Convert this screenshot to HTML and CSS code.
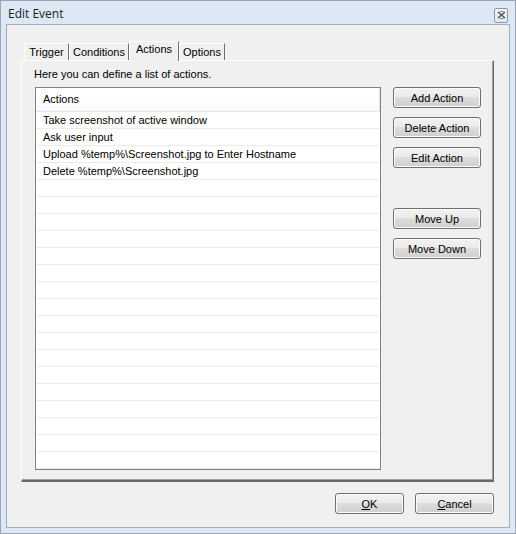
FILE: index.html
```html
<!DOCTYPE html>
<html>
<head>
<meta charset="utf-8">
<link rel="stylesheet" href="styles.css">
</head>
<body>
<div class="window">
  <div class="titlebar">
    <span class="title">Edit Event</span>
    <span class="close">
      <svg width="9" height="8" viewBox="0 0 9 8"><path d="M1 1 L8 7 M8 1 L1 7" stroke="#555" stroke-width="1.6" fill="none"/><path d="M2.5 0.5 h4 M2.5 7.5 h4" stroke="#888" stroke-width="1" fill="none"/></svg>
    </span>
  </div>
  <div class="client">
    <div class="tabs">
      <div class="tab t1">Trigger</div>
      <div class="tab t2">Conditions</div>
      <div class="tab sel">Actions</div>
      <div class="tab t4">Options</div>
    </div>
    <div class="panel">
      <div class="hint">Here you can define a list of actions.</div>
      <div class="content">
        <div class="list">
          <div class="lhead">Actions</div>
          <div class="row">Take screenshot of active window</div>
          <div class="row">Ask user input</div>
          <div class="row">Upload %temp%\Screenshot.jpg to Enter Hostname</div>
          <div class="row">Delete %temp%\Screenshot.jpg</div>
          <div class="row"></div><div class="row"></div><div class="row"></div><div class="row"></div>
          <div class="row"></div><div class="row"></div><div class="row"></div><div class="row"></div>
          <div class="row"></div><div class="row"></div><div class="row"></div><div class="row"></div>
          <div class="row"></div><div class="row"></div><div class="row"></div><div class="row"></div>
          <div class="row"></div>
        </div>
        <div class="side">
          <button class="btn">Add Action</button>
          <button class="btn">Delete Action</button>
          <button class="btn">Edit Action</button>
          <button class="btn gap">Move Up</button>
          <button class="btn">Move Down</button>
        </div>
      </div>
    </div>
    <div class="footer">
      <button class="btn ok"><u>O</u>K</button>
      <button class="btn cancel"><u>C</u>ancel</button>
    </div>
  </div>
</div>
</body>
</html>
```

FILE: styles.css
```css
* { box-sizing: border-box; }
html, body { margin: 0; padding: 0; }
body {
  width: 516px;
  height: 534px;
  font-family: "Liberation Sans", Arial, sans-serif;
  font-size: 11px;
  color: #000;
  overflow: hidden;
}
.window {
  width: 516px;
  height: 534px;
  background: #dde8f5;
  border: 1px solid #9aa6b6;
  padding: 0 5px 5px 5px;
  display: flex;
  flex-direction: column;
}
.titlebar {
  height: 23px;
  display: flex;
  align-items: center;
  justify-content: space-between;
  position: relative;
}
.title {
  font-family: "Open Sans", "Liberation Sans", sans-serif;
  font-size: 12px;
  margin-left: 2px;
  margin-top: 2px;
  color: #1e1e1e;
}
.close {
  width: 14px;
  height: 15px;
  border: 1px solid #8e98a8;
  border-radius: 2px;
  background: linear-gradient(#f4f7fb, #dfe6ef);
  display: flex;
  align-items: center;
  justify-content: center;
  margin-right: 2px;
  margin-top: 5px;
}
.client {
  flex: 1;
  background: #f0f0f0;
  border: 1px solid #a3adbb;
  padding: 16px 14px 0 15px;
  display: flex;
  flex-direction: column;
}
.tabs {
  display: flex;
  align-items: flex-end;
  height: 19px;
  padding-left: 2px;
  position: relative;
  z-index: 1;
}
.tab {
  height: 17px;
  border-top: 1px solid #fff;
  border-left: 1px solid #fff;
  border-right: 1px solid #6f6f6f;
  padding: 2px 0 0 0;
  text-align: center;
  background: #f0f0f0;
  line-height: 13px;
}
.t1 { width: 45px; }
.t2 { width: 60px; }
.t4 { width: 46px; }
.tab.sel {
  width: 50px;
  height: 20px;
  margin-bottom: -1px;
  padding-top: 1px;
}
.panel {
  height: 422px;
  width: 473px;
  margin-left: -1px;
  border-top: 1px solid #fff;
  border-left: 1px solid #fff;
  border-right: 1px solid #6a6a6a;
  border-bottom: 2px solid #6a6a6a;
  box-shadow: inset -1px -1px 0 #a0a0a0;
  padding: 6px 0 0 12px;
  display: flex;
  flex-direction: column;
}
.hint {
  height: 14px;
  line-height: 14px;
  margin-bottom: 6px;
}
.content {
  display: flex;
  align-items: flex-start;
}
.list {
  width: 346px;
  height: 383px;
  margin-left: 1px;
  border: 1px solid #828282;
  background: #fff;
  overflow: hidden;
}
.lhead {
  height: 24px;
  line-height: 23px;
  padding-left: 7px;
  border-bottom: 1px solid #e5e5e5;
  background: linear-gradient(#fff, #fff 50%, #f7f8f9);
  border-right: 1px solid #e1e4e8;
}
.row {
  height: 17px;
  line-height: 17px;
  padding-left: 7px;
  border-bottom: 1px solid #ebebeb;
  white-space: nowrap;
}
.side {
  display: flex;
  flex-direction: column;
  margin-left: 12px;
  gap: 9px;
}
.btn {
  font-family: "Liberation Sans", Arial, sans-serif;
  font-size: 11px;
  color: #000;
  width: 88px;
  height: 21px;
  padding: 0;
  border: 1px solid #707070;
  border-radius: 3px;
  background: linear-gradient(#f2f2f2 0%, #ebebeb 45%, #dddddd 50%, #cfcfcf 100%);
  box-shadow: inset 0 0 0 1px #fcfcfc;
  line-height: 18px;
}
.btn.gap { margin-top: 31px; }
.footer {
  display: flex;
  justify-content: flex-end;
  gap: 11px;
  margin-top: 11px;
  padding-right: 1px;
}
.btn.ok { width: 69px; }
.btn.cancel { width: 79px; }
```
